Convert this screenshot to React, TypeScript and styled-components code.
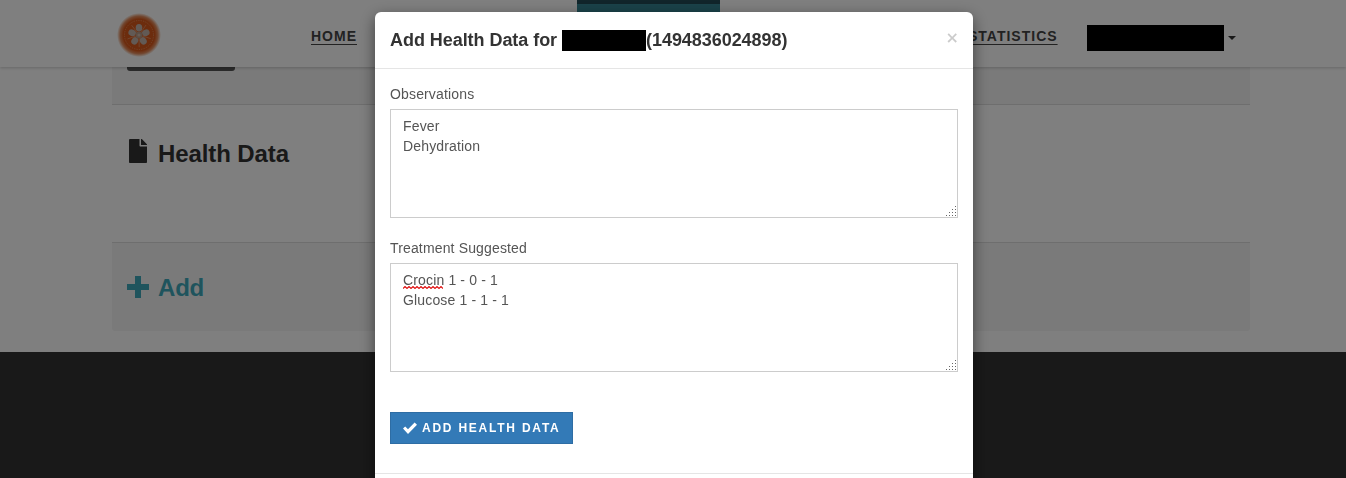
import React from "react";
import styled, { createGlobalStyle } from "styled-components";
import { FaFile } from "react-icons/fa";

const GlobalStyle = createGlobalStyle`
  html, body {
    margin: 0;
    height: 100%;
    overflow: hidden;
    background: #fff;
    font-family: "Liberation Sans", Arial, sans-serif;
    font-size: 14px;
    color: #333;
  }
`;

const Logo = () => (
  <LogoSvg viewBox="0 0 44 44" aria-hidden="true">
    <defs>
      <radialGradient id="logoGlow">
        <stop offset="0.72" stopColor="#d9581a" />
        <stop offset="0.86" stopColor="#d9601f" stopOpacity="0.7" />
        <stop offset="1" stopColor="#d87030" stopOpacity="0" />
      </radialGradient>
    </defs>
    <circle cx="22" cy="22" r="22" fill="url(#logoGlow)" />
    <circle cx="22" cy="22" r="14.5" fill="none" stroke="#e8a67c" strokeWidth="0.6" strokeDasharray="1.2 1.2" />
    {[0, 72, 144, 216, 288].map((angle) => (
      <g key={angle} transform={`rotate(${angle} 22 22)`}>
        <ellipse cx="22" cy="14.8" rx="3.3" ry="3.8" fill="#c4b4aa" />
        <line x1="22" y1="22" x2="29" y2="12" stroke="#e8a67c" strokeWidth="0.6" />
      </g>
    ))}
    <circle cx="22" cy="22" r="3.4" fill="#b89a86" />
    <circle cx="22" cy="22" r="1.6" fill="#d0b8a8" />
  </LogoSvg>
);

const Resizer = () => (
  <ResizerSvg viewBox="0 0 10 10" aria-hidden="true">
    {[
      [9, 0],
      [6, 3],
      [9, 3],
      [3, 6],
      [6, 6],
      [9, 6],
      [0, 9],
      [3, 9],
      [6, 9],
      [9, 9],
    ].map(([x, y]) => (
      <rect key={`${x}-${y}`} x={x} y={y} width="1" height="1" fill="#666" />
    ))}
  </ResizerSvg>
);

const App = () => (
  <>
    <GlobalStyle />
    <Header>
      <Logo />
      <NavLink $offset={150}>HOME</NavLink>
      <ActiveTab />
      <NavLink $offset={248}>STATISTICS</NavLink>
      <UserMenu>
        <Redacted $width={137} $height={26} />
        <Caret />
      </UserMenu>
    </Header>

    <Container>
      <TopPanel>
        <CutButton />
      </TopPanel>
      <HealthSection>
        <FileIcon />
        <SectionTitle>Health Data</SectionTitle>
      </HealthSection>
      <AddPanel>
        <PlusIcon viewBox="0 0 22 22" aria-hidden="true">
          <path d="M8 0h6v8h8v6h-8v8H8v-8H0V8h8z" />
        </PlusIcon>
        <AddLabel>Add</AddLabel>
      </AddPanel>
    </Container>

    <Footer />

    <Backdrop />
    <Modal>
      <ModalHeader>
        <ModalTitle>
          Add Health Data for&nbsp;
          <Redacted $width={84} $height={21} />
          (1494836024898)
        </ModalTitle>
        <CloseButton>×</CloseButton>
      </ModalHeader>
      <ModalBody>
        <FieldLabel>Observations</FieldLabel>
        <FieldBox>
          <NoteArea readOnly spellCheck={false} defaultValue={"Fever\nDehydration"} />
          <Resizer />
        </FieldBox>
        <FieldLabel>Treatment Suggested</FieldLabel>
        <FieldBox>
          <NoteArea readOnly spellCheck={false} defaultValue={"Crocin 1 - 0 - 1\nGlucose 1 - 1 - 1"} />
          <Squiggle viewBox="0 0 40 3" aria-hidden="true">
            <path
              d="M0 2.5 L2 0.5 L4 2.5 L6 0.5 L8 2.5 L10 0.5 L12 2.5 L14 0.5 L16 2.5 L18 0.5 L20 2.5 L22 0.5 L24 2.5 L26 0.5 L28 2.5 L30 0.5 L32 2.5 L34 0.5 L36 2.5 L38 0.5 L40 2.5"
              fill="none"
              stroke="#e01010"
              strokeWidth="1.1"
            />
          </Squiggle>
          <Resizer />
        </FieldBox>
        <SubmitButton type="button">
          <CheckIcon viewBox="0 0 14 12" aria-hidden="true">
            <path d="M0 6.6 L2.2 4.4 L5 7.2 L11.6 0.4 L14 2.7 L5 12 Z" />
          </CheckIcon>
          ADD HEALTH DATA
        </SubmitButton>
      </ModalBody>
      <ModalFooter />
    </Modal>
  </>
);

const Header = styled.header`
  display: flex;
  align-items: center;
  height: 67px;
  padding-left: 117px;
  background: #fff;
  box-shadow: 0 1px 3px rgba(0, 0, 0, 0.2);
  position: relative;
  z-index: 1;
`;

const LogoSvg = styled.svg`
  width: 44px;
  height: 44px;
  flex: none;
  margin-top: 3px;
`;

const NavLink = styled.a<{ $offset: number }>`
  margin-left: ${({ $offset }) => $offset}px;
  margin-top: 4px;
  font-size: 14px;
  font-weight: 700;
  letter-spacing: 1px;
  color: #444;
  text-decoration: underline;
  text-underline-offset: 3px;
`;

const ActiveTab = styled.div`
  align-self: flex-start;
  width: 143px;
  height: 67px;
  margin-left: 220px;
  box-sizing: border-box;
  border-top: 4px solid #224a55;
  background: #358593;
`;

const UserMenu = styled.div`
  display: flex;
  align-items: center;
  margin-left: 29px;
  margin-top: 9px;
  gap: 4px;
`;

const Caret = styled.span`
  width: 0;
  height: 0;
  border-top: 4px solid #333;
  border-left: 4px solid transparent;
  border-right: 4px solid transparent;
`;

const Redacted = styled.span<{ $width: number; $height: number }>`
  display: inline-block;
  width: ${({ $width }) => $width}px;
  height: ${({ $height }) => $height}px;
  background: #000;
  vertical-align: middle;
`;

const Container = styled.main`
  width: 1138px;
  margin-left: 112px;
  padding-bottom: 21px;
`;

const TopPanel = styled.div`
  height: 37px;
  padding-left: 15px;
  background: #f5f5f5;
  border-bottom: 1px solid #ddd;
`;

const CutButton = styled.div`
  width: 108px;
  height: 4px;
  background: #555;
  border-radius: 0 0 3px 3px;
`;

const HealthSection = styled.section`
  display: flex;
  align-items: flex-start;
  box-sizing: border-box;
  height: 138px;
  padding: 34px 0 0 17px;
  border-bottom: 1px solid #ddd;
`;

const FileIcon = styled(FaFile)`
  width: 18px;
  height: 24px;
  color: #333;
`;

const SectionTitle = styled.h2`
  margin: 0 0 0 11px;
  padding-top: 1px;
  font-size: 24px;
  line-height: 28px;
  font-weight: 700;
  letter-spacing: -0.1px;
  color: #333;
`;

const AddPanel = styled.section`
  display: flex;
  align-items: center;
  height: 88px;
  padding-left: 15px;
  background: #f5f5f5;
  border-radius: 0 0 3px 3px;
`;

const PlusIcon = styled.svg`
  width: 22px;
  height: 22px;
  fill: #3fa9bb;
`;

const AddLabel = styled.span`
  margin: 2px 0 0 9px;
  font-size: 24px;
  font-weight: 700;
  letter-spacing: -0.2px;
  color: #3fa9bb;
`;

const Footer = styled.footer`
  height: 200px;
  background: #333;
`;

const Backdrop = styled.div`
  position: fixed;
  inset: 0;
  z-index: 2;
  background: rgba(0, 0, 0, 0.5);
`;

const Modal = styled.div`
  position: fixed;
  top: 12px;
  left: 375px;
  z-index: 3;
  width: 598px;
  background: #fff;
  border-radius: 6px;
  box-shadow: 0 5px 15px rgba(0, 0, 0, 0.5);
`;

const ModalHeader = styled.div`
  display: flex;
  align-items: center;
  justify-content: space-between;
  box-sizing: border-box;
  height: 57px;
  padding: 0 15px;
  border-bottom: 1px solid #e5e5e5;
`;

const ModalTitle = styled.h4`
  margin: 0;
  font-size: 18px;
  font-weight: 700;
  line-height: 20px;
  letter-spacing: -0.05px;
  color: #333;
  display: flex;
  align-items: center;
`;

const CloseButton = styled.span`
  margin: -5px -1px 0 0;
  font-family: "DejaVu Sans", sans-serif;
  font-size: 16px;
  font-weight: 700;
  line-height: 1;
  color: #000;
  opacity: 0.2;
`;

const ModalBody = styled.div`
  padding: 15px;
`;

const FieldLabel = styled.label`
  display: block;
  margin-bottom: 5px;
  line-height: 20px;
  letter-spacing: 0.15px;
  color: #555;
`;

const FieldBox = styled.div`
  position: relative;
  margin-bottom: 20px;
`;

const NoteArea = styled.textarea`
  display: block;
  box-sizing: border-box;
  width: 568px;
  height: 109px;
  padding: 6px 12px;
  border: 1px solid #ccc;
  border-radius: 0;
  outline: none;
  resize: none;
  font-family: "Liberation Sans", Arial, sans-serif;
  font-size: 14px;
  line-height: 20px;
  letter-spacing: 0.15px;
  color: #555;
`;

const ResizerSvg = styled.svg`
  position: absolute;
  right: 2px;
  bottom: 2px;
  width: 10px;
  height: 10px;
`;

const Squiggle = styled.svg`
  position: absolute;
  top: 23px;
  left: 13px;
  width: 40px;
  height: 3px;
`;

const CheckIcon = styled.svg`
  width: 14px;
  height: 12px;
  fill: #fff;
`;

const SubmitButton = styled.button`
  display: flex;
  align-items: center;
  gap: 5px;
  box-sizing: border-box;
  height: 32px;
  margin-top: 40px;
  padding: 0 11px 0 12px;
  background: #337ab7;
  border: 1px solid #2e6da4;
  border-radius: 0;
  font-family: "Liberation Sans", Arial, sans-serif;
  font-size: 12px;
  font-weight: 700;
  letter-spacing: 1.77px;
  color: #fff;
`;

const ModalFooter = styled.div`
  height: 60px;
  margin-top: 14px;
  border-top: 1px solid #e5e5e5;
`;

export default App;
